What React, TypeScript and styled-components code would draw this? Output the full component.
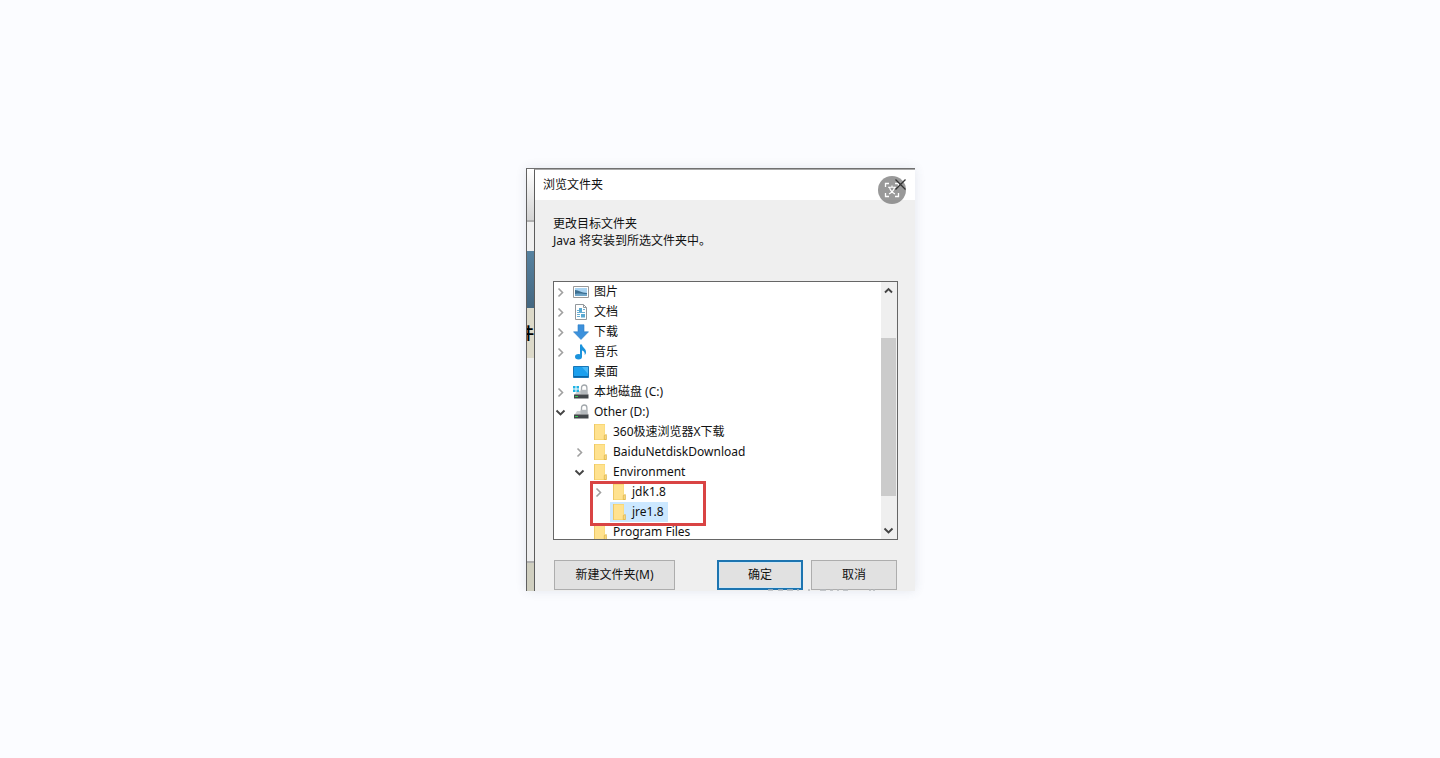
import React from 'react';
import styled, { createGlobalStyle } from 'styled-components';

const GlobalStyle = createGlobalStyle`
  * { box-sizing: border-box; }
  body {
    margin: 0;
    background: #fbfcff;
    color: #111;
    font: 12px/20px "Noto Sans", "Noto Sans CJK SC", sans-serif;
  }
  button { font: inherit; color: inherit; }
`;

const Page = styled.main`
  min-height: 100vh;
  padding: 1px 0 0 1px;
  display: grid;
  place-items: center;
`;

const Frame = styled.div`
  position: relative;
  display: flex;
  width: 389px;
  max-width: 100%;
  overflow: hidden;
  border-top: 1px solid #707070;
  border-left: 1px solid #606060;
`;

const Shadow = styled.div`
  max-width: 100%;
  box-shadow: 0 0 10px rgba(60, 70, 110, 0.12);
`;

const Behind = styled.div`
  flex: none;
  width: 7px;
  display: flex;
  flex-direction: column;
  overflow: hidden;
  background: #eeeeee;
`;

const Band = styled.div<{ $h?: number; $bg: string; $line?: boolean }>`
  ${p => (p.$h ? `height: ${p.$h}px;` : 'flex: 1;')}
  flex-shrink: 0;
  background: ${p => p.$bg};
  border-bottom: ${p => (p.$line ? '2px solid #b0b0b0' : '0')};
  display: flex;
  align-items: center;
  justify-content: flex-end;
  color: #000;
  font-size: 16px;
  font-weight: 700;
`;

const Dialog = styled.section`
  flex: 1;
  min-width: 0;
  border-left: 1px solid #5c5c5c;
  border-top: 1px solid #a8a8a8;
  background: #efefef;
`;

const TitleBar = styled.header`
  height: 30px;
  padding: 0 9px 0 8px;
  display: flex;
  align-items: center;
  justify-content: space-between;
  background: #fff;
`;

const Title = styled.h1`
  margin: 0;
  font: inherit;
`;

const CloseButton = styled.button`
  position: relative;
  z-index: 1;
  display: flex;
  padding: 0 0 2px;
  border: 0;
  background: none;
`;

const TranslateButton = styled.button`
  position: absolute;
  top: 7px;
  right: 9px;
  width: 28px;
  height: 28px;
  padding: 0;
  display: grid;
  place-items: center;
  border: 0;
  border-radius: 50%;
  background: rgba(110, 110, 110, 0.7);
`;

const Content = styled.div`
  padding: 15px 17px 1px 18px;
`;

const Message = styled.p`
  margin: 0 0 32px;
  line-height: 17px;
`;

const TreeBox = styled.div`
  display: flex;
  height: 259px;
  border: 1px solid #666;
  background: #fff;
`;

const Tree = styled.ul`
  flex: 1;
  min-width: 0;
  margin: 0;
  padding: 0;
  overflow: hidden;
  list-style: none;
`;

const Row = styled.li<{ $depth: number }>`
  display: flex;
  align-items: center;
  height: 20px;
  padding-left: ${p => p.$depth * 19}px;
`;

const Toggle = styled.span`
  flex: none;
  width: 13px;
  display: flex;
  justify-content: center;
`;

const Entry = styled.span<{ $selected?: boolean }>`
  display: flex;
  align-items: center;
  gap: 5px;
  height: 20px;
  margin-left: 5px;
  padding: 0 4px 0 1px;
  background: ${p => (p.$selected ? '#cce8ff' : 'none')};
  white-space: nowrap;
`;

const ScrollBar = styled.div`
  flex: none;
  width: 16px;
  display: flex;
  flex-direction: column;
  background: #efefef;
  padding-right: 1px;
`;

const ScrollButton = styled.button`
  height: 17px;
  padding: 0;
  border: 0;
  background: none;
  display: grid;
  place-items: center;
`;

const Track = styled.div`
  flex: 1;
  padding: 39px 0 26px;
  display: flex;
`;

const Thumb = styled.div`
  flex: 1;
  background: #cbcbcb;
`;

const Highlight = styled.div`
  position: absolute;
  left: 63px;
  top: 312px;
  width: 116px;
  height: 45px;
  border: 3px solid #d94444;
`;

const Actions = styled.div`
  display: flex;
  gap: 8px;
  padding: 20px 1px 0;
`;

const Action = styled.button<{ $primary?: boolean; $wide?: boolean }>`
  width: ${p => (p.$wide ? 121 : 86)}px;
  height: 30px;
  margin-right: ${p => (p.$wide ? 'auto' : '0')};
  padding: 0;
  border: ${p => (p.$primary ? '2px solid #1c74b0' : '1px solid #adadad')};
  background: #e1e1e1;
  box-shadow: ${p => (p.$primary ? 'inset 0 0 0 1px #cfe6f5' : 'none')};
`;

const Watermark = styled.svg`
  position: absolute;
  right: 38px;
  bottom: 0;
`;

const Chevron = ({ dir }: { dir: 'right' | 'down' | 'up' }) => {
  const d = { right: 'M3.5 1.5 7.5 5.5 3.5 9.5', down: 'M1.5 3.5 5.5 7.5 9.5 3.5', up: 'M2 7.5 5.5 4 9 7.5' }[dir];
  return (
    <svg width="11" height="11" viewBox="0 0 11 11" fill="none" aria-hidden>
      <path d={d} stroke={dir === 'right' ? '#a0a0a0' : '#444'} strokeWidth={dir === 'right' ? 1.6 : 1.9} />
    </svg>
  );
};

type IconName = 'picture' | 'document' | 'download' | 'music' | 'desktop' | 'system' | 'drive' | 'folder';

const Drive = () => (
  <>
    <path d="M8.500 6.500V3.700a2.700 2.700 0 0 1 5.400 0v3" fill="none" stroke="#a2a8ac" strokeWidth="1.300" />
    <path d="M4 7h10.500l1 4h-14z" fill="#cdd0d2" />
    <path d="M7.500 5.800h7v4.200h-7z" fill="#b4b9bd" />
    <path d="M1 10.500h14.500v4H1z" fill="#42474b" />
    <path d="M2 12.500h3" stroke="#38c653" />
  </>
);

const shapes: Record<IconName, React.ReactNode> = {
  picture: (
    <>
      <path d="M.5 2.500h15v11H.5z" fill="#fff" stroke="#999" />
      <path d="M2 4h12v8H2z" fill="#a9d3f1" />
      <path d="M2 6c4 0 6 3 12 3v3H2z" fill="#3d6f91" />
      <path d="M2 10c5-1 7 0 12 0v2H2z" fill="#6fa5c8" />
    </>
  ),
  document: (
    <>
      <path d="M2.500.5h8l3 3v12h-11z" fill="#fff" stroke="#92989c" />
      <path d="M10.500.5v3h3" fill="none" stroke="#92989c" />
      <path d="M4 6.500h2M10 5.500h2M4 8.500h8M4 10.500h3M4 12.500h3" stroke="#6bb0d4" />
      <path d="M6 4h3v4H6zM8 10h4v3.500H8z" fill="#58a9d3" />
    </>
  ),
  download: <path d="M5 .8h6v7h4.500L8 15.500.5 7.800H5z" fill="#3c91dc" stroke="#2b7dc4" strokeWidth=".6" />,
  music: (
    <>
      <ellipse cx="5.500" cy="12.800" rx="3.500" ry="2.700" fill="#1b93dc" />
      <path d="M7 .5h2c0 3 4.500 4 4 8-.2 1.500-.8 2-1.300 2.500.4-2.500-.9-4-2.700-4.500v6.500H7z" fill="#1b93dc" />
    </>
  ),
  desktop: (
    <>
      <path d="M.5 2.500h15v11H.5z" fill="#1ca0ee" stroke="#1976b6" />
      <path d="M9 3h6v7z" fill="#48b9f7" />
      <path d="M1 12.500h14" stroke="#0b65a5" />
    </>
  ),
  system: (
    <>
      <Drive />
      <path d="M0 2h2.500v2.500H0zM3.500 2H6v2.500H3.500zM0 5.500h2.500V8H0zM3.500 5.500H6V8H3.500z" fill="#20b3e4" />
    </>
  ),
  drive: <Drive />,
  folder: (
    <>
      <path d="M2 0h11v11l1.500.5V16H2z" fill="#f8d775" />
      <path d="M3 1h9.500v14H3z" fill="#ffe28f" />
      <path d="M2.500 0v16" stroke="#ecc766" />
      <path d="M12.300 15.500v-4l2-1v5z" fill="#fbe08a" stroke="#dbae40" strokeWidth=".7" />
    </>
  ),
};

const Icon = ({ name }: { name: IconName }) => (
  <svg width="16" height="16" viewBox="0 0 16 16" aria-hidden>
    {shapes[name]}
  </svg>
);

interface Item {
  label: string;
  icon: IconName;
  depth: number;
  toggle?: 'right' | 'down';
  selected?: boolean;
}

const items: Item[] = [
  { label: '图片', icon: 'picture', depth: 0, toggle: 'right' },
  { label: '文档', icon: 'document', depth: 0, toggle: 'right' },
  { label: '下载', icon: 'download', depth: 0, toggle: 'right' },
  { label: '音乐', icon: 'music', depth: 0, toggle: 'right' },
  { label: '桌面', icon: 'desktop', depth: 0 },
  { label: '本地磁盘 (C:)', icon: 'system', depth: 0, toggle: 'right' },
  { label: 'Other (D:)', icon: 'drive', depth: 0, toggle: 'down' },
  { label: '360极速浏览器X下载', icon: 'folder', depth: 1 },
  { label: 'BaiduNetdiskDownload', icon: 'folder', depth: 1, toggle: 'right' },
  { label: 'Environment', icon: 'folder', depth: 1, toggle: 'down' },
  { label: 'jdk1.8', icon: 'folder', depth: 2, toggle: 'right' },
  { label: 'jre1.8', icon: 'folder', depth: 2, selected: true },
  { label: 'Program Files', icon: 'folder', depth: 1 },
];

export default function App() {
  return (
    <Page>
      <GlobalStyle />
      <Shadow>
        <Frame>
          <Behind aria-hidden>
            <Band $h={53} $bg="linear-gradient(#fff, #d4d4d4)" $line />
            <Band $h={29} $bg="#f0f0f0" />
            <Band $h={57} $bg="linear-gradient(#5682a0, #446781)" />
            <Band $h={50} $bg="#dcd9c9">件</Band>
            <Band $bg="#eeeeee" $line />
            <Band $h={28} $bg="#d0cfc0" />
          </Behind>
          <Dialog aria-label="浏览文件夹">
            <TitleBar>
              <Title>浏览文件夹</Title>
              <CloseButton aria-label="关闭">
                <svg width="11" height="11" viewBox="0 0 11 11" aria-hidden>
                  <path d="M.5.5l10 10M10.500.5l-10 10" stroke="#333" strokeWidth="1.300" />
                </svg>
              </CloseButton>
            </TitleBar>
            <Content>
              <Message>
                更改目标文件夹
                <br />
                Java 将安装到所选文件夹中。
              </Message>
              <TreeBox>
                <Tree role="tree">
                  {items.map(item => (
                    <Row key={item.label} $depth={item.depth} role="treeitem" aria-selected={!!item.selected}>
                      <Toggle>{item.toggle && <Chevron dir={item.toggle} />}</Toggle>
                      <Entry $selected={item.selected}>
                        <Icon name={item.icon} />
                        {item.label}
                      </Entry>
                    </Row>
                  ))}
                </Tree>
                <ScrollBar>
                  <ScrollButton aria-label="向上滚动"><Chevron dir="up" /></ScrollButton>
                  <Track><Thumb /></Track>
                  <ScrollButton aria-label="向下滚动"><Chevron dir="down" /></ScrollButton>
                </ScrollBar>
              </TreeBox>
              <Actions>
                <Action $wide>新建文件夹(M)</Action>
                <Action $primary>确定</Action>
                <Action>取消</Action>
              </Actions>
            </Content>
          </Dialog>
          <Highlight />
          <TranslateButton aria-label="翻译图片">
            <svg width="16" height="16" viewBox="0 0 16 16" fill="none" stroke="#fff" strokeWidth="1.300" aria-hidden>
              <path d="M1.500 5V1.500H5M11 1.500h3.500V5M14.500 11v3.500H11M5 14.500H1.500V11" />
              <path d="M4 5.200h8M8 3.500v1.700M5.500 5.500c.8 3 2.500 5 5.500 6.500M10.500 5.500c-.8 3-2.500 5-5.500 6.500" strokeWidth="1.100" />
            </svg>
          </TranslateButton>
          <Watermark width="110" height="2" viewBox="0 0 110 2" aria-hidden>
            <path
              d="M1 1h5M11 1h5M20 1h6M30 1h2M41 1h2M53 1h6M63 1h3M70 1h2M76 1h5M102 1h2M106 1h2"
              stroke="#b4b8bc"
              strokeWidth="1.500"
            />
          </Watermark>
        </Frame>
      </Shadow>
    </Page>
  );
}
